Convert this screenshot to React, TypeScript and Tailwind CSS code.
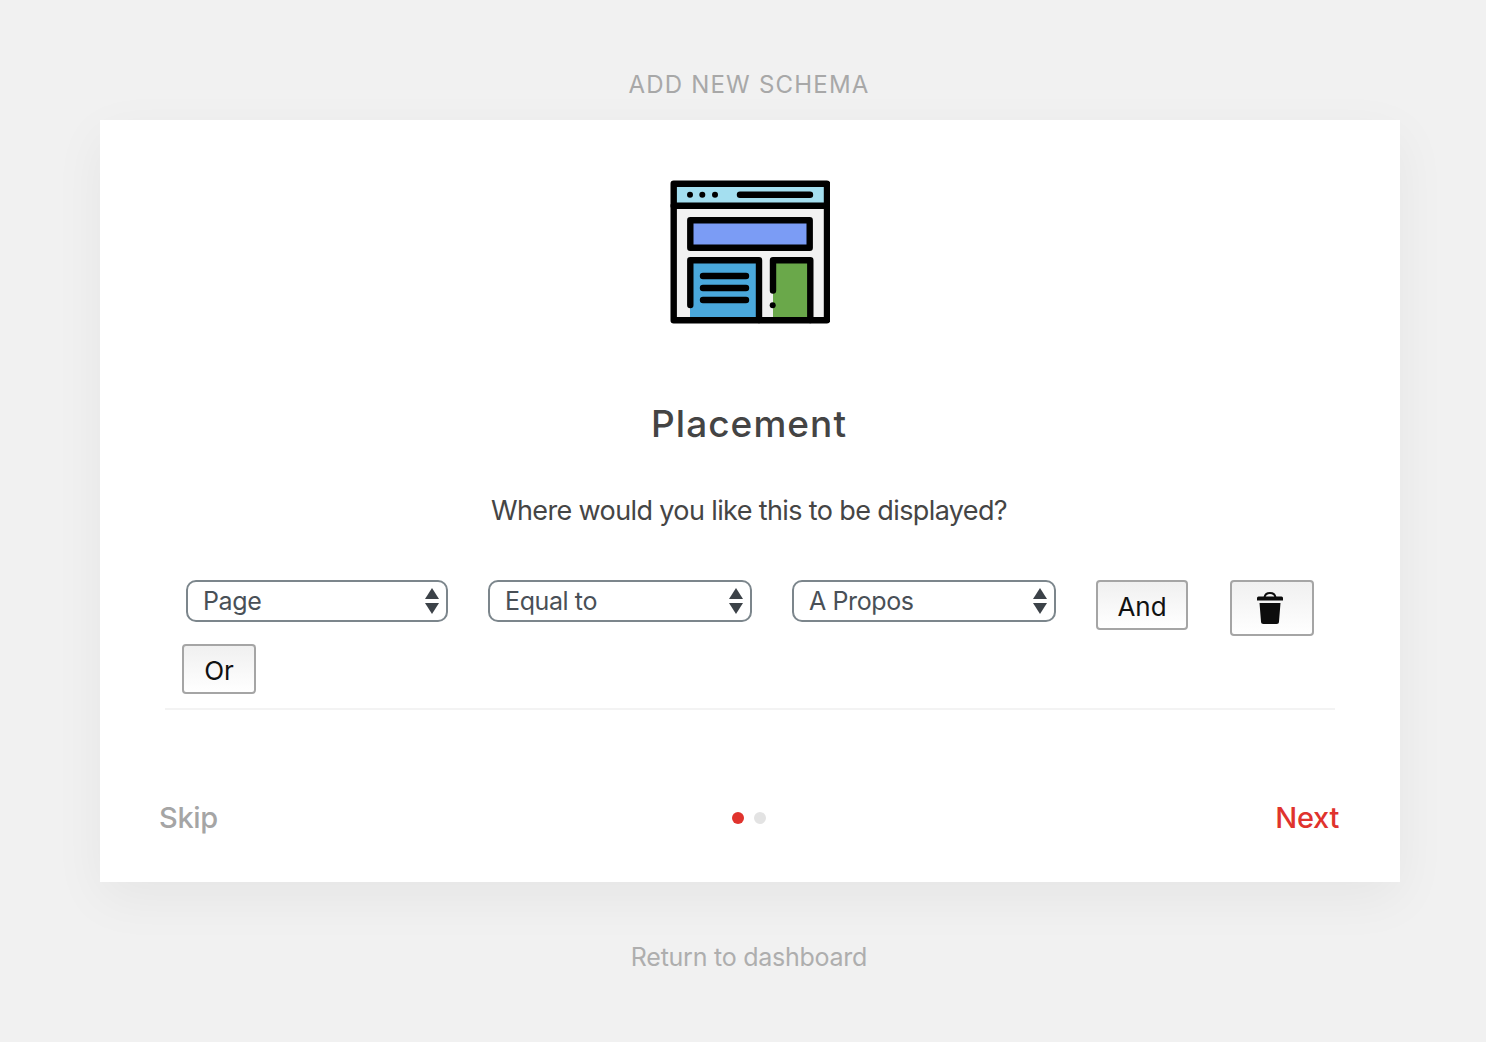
/**
 * Add-new-schema wizard — "Placement" step.
 */

const FONT = "font-['Inter','Noto_Sans',sans-serif]";

function PlacementIcon() {
  return (
    <svg width="160" height="144" viewBox="0 0 160 144" fill="none" aria-hidden="true">
      <rect x="3.7" y="3.7" width="153.3" height="136.6" fill="#f1f1f1" />
      <rect x="3.7" y="3.7" width="153.3" height="22" fill="#a4dff0" />
      <path d="M20 83H89V137H20Z" fill="#4aa8dc" />
      <path d="M103 83H140V137H103Z" fill="#6aa84a" />
      <g stroke="#000" strokeWidth="6.4" strokeLinecap="round" strokeLinejoin="round">
        <rect x="3.7" y="3.7" width="153.3" height="136.6" />
        <path d="M3.7 25.7H157" />
        <path d="M70 14.7H140" />
        <rect x="20.3" y="40.3" width="119.4" height="27.4" fill="#7b9cf5" />
        <path d="M20.3 125V80.3H89V140" />
        <path d="M33 96H76M33 108H76M33 120H76" />
        <path d="M103 110.5V80.3H140.3V140" />
      </g>
      <g fill="#000">
        <circle cx="20" cy="14.7" r="3" />
        <circle cx="32.3" cy="14.7" r="3" />
        <circle cx="45" cy="14.7" r="3" />
        <circle cx="102.7" cy="125.3" r="3" />
      </g>
    </svg>
  );
}

function TrashIcon() {
  return (
    <svg className="mr-[4px]" width="26" height="32" viewBox="0 0 26 32" aria-hidden="true">
      <path d="M7.5 5.5C8 2 10 1 13 1s5 1 5.500 4.500" fill="none" stroke="#0d0d0d" strokeWidth="2" />
      <path d="M1.500 4.500H24.500A1.500 1.500 0 0 1 26 6V8.500H0V6A1.500 1.500 0 0 1 1.500 4.500Z" fill="#0d0d0d" />
      <path d="M2.500 11H23.500L22 29.500A2.500 2.500 0 0 1 19.500 32H6.500A2.500 2.500 0 0 1 4 29.500Z" fill="#0d0d0d" />
    </svg>
  );
}

function FakeSelect({ value, width }: { value: string; width: string }) {
  return (
    <div
      className={`${width} h-[42px] flex items-center justify-between pl-[15px] pr-[7px] bg-white border-2 border-[#7c868c] rounded-[10px] text-[25px] tracking-[-0.4px] text-[#495057]`}
    >
      <span className="pt-[2px]">{value}</span>
      <svg width="14" height="26" viewBox="0 0 14 26" aria-hidden="true">
        <path d="M7 0L14 11H0Z" fill="#3c4248" />
        <path d="M7 26L0 15H14Z" fill="#3c4248" />
      </svg>
    </div>
  );
}

const buttonClass =
  "flex items-center justify-center border-2 border-[#a5a5a5] rounded-[4px] bg-gradient-to-b from-[#f0f0f0] to-white text-[26px] text-[#111]";

export default function App() {
  return (
    <div className={`${FONT} min-h-[1042px] bg-[#f1f1f1] pl-[100px]`}>
      <div className="w-[1300px] flex flex-col items-center">
        <div className="h-[120px] w-full flex items-center justify-center pt-[49px] pr-[2px] text-[24px] tracking-[1.2px] text-[#a8a8a8]">
          ADD NEW SCHEMA
        </div>

        <div className="w-full h-[762px] bg-white shadow-[0_16px_50px_rgba(0,0,0,0.05)] flex flex-col items-center pt-[60px]">
          <PlacementIcon />

          <h1 className="mt-[72px] pr-[2px] text-[37px] leading-[56px] font-medium tracking-[1.05px] text-[#444]">Placement</h1>

          <p className="mt-[39px] pr-[2px] text-[27px] leading-[40px] tracking-[-0.62px] text-[#454545]">
            Where would you like this to be displayed?
          </p>

          <div className="mt-[49px] w-[1170px] pl-[17px] pb-[14px] border-b-2 border-[#f3f3f3]">
            <div className="flex items-start pl-[4px] gap-[40px]">
              <FakeSelect value="Page" width="w-[262px]" />
              <FakeSelect value="Equal to" width="w-[264px]" />
              <FakeSelect value="A Propos" width="w-[264px]" />
              <button type="button" className={`${buttonClass} w-[92px] h-[50px] pt-[2px]`}>
                And
              </button>
              <button type="button" className={`${buttonClass} w-[84px] h-[56px] ml-[2px]`}>
                <TrashIcon />
              </button>
            </div>
            <button type="button" className={`${buttonClass} w-[74px] h-[50px] mt-[8px] pt-[2px]`}>
              Or
            </button>
          </div>

          <div className="mt-[86px] mr-[2px] w-[1180px] flex items-center justify-between text-[29px] font-medium tracking-[-0.3px]">
            <a className="text-[#a5a5a5]">Skip</a>
            <div className="flex items-center gap-[10px] pl-[4px]">
              <span className="w-[12px] h-[12px] rounded-full bg-[#e0332d]" />
              <span className="w-[12px] h-[12px] rounded-full bg-[#e3e3e3]" />
            </div>
            <a className="text-[#e0332d]">Next</a>
          </div>
        </div>

        <a className="mt-[56px] pr-[2px] text-[25px] leading-[38px] tracking-[-0.25px] text-[#aeaeae]">Return to dashboard</a>
      </div>
    </div>
  );
}
